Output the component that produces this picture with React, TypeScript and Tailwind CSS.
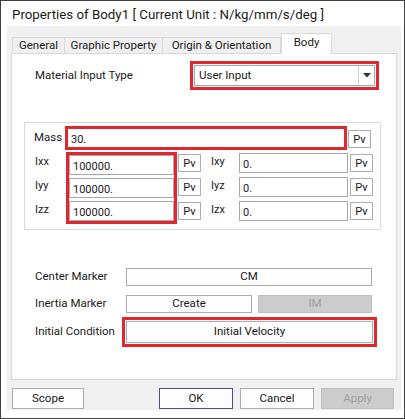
import React from "react";

const F = { fontFamily: 'Roboto, "Noto Sans", sans-serif' };

function Pv() {
  return (
    <div className="w-[23px] h-[18px] border border-[#adadad] bg-[#fdfdfd] flex items-center justify-center text-[11px] text-[#1a1a1a] leading-none">
      Pv
    </div>
  );
}

function Field({ value, w }: { value: string; w: string }) {
  return (
    <div className={`${w} h-[20px] border border-[#a8a8a8] bg-white flex items-center pl-[3px] pt-[2px] text-[11px] text-[#1a1a1a] leading-none`}>
      {value}
    </div>
  );
}

function Btn({ children, w, cls = "" }: { children: React.ReactNode; w: string; cls?: string }) {
  return (
    <div className={`${w} h-[18px] border border-[#adadad] bg-[#fdfdfd] flex items-center justify-center text-[11.5px] text-[#1a1a1a] leading-none ${cls}`}>
      {children}
    </div>
  );
}

export default function App() {
  return (
    <div className="w-[405px] h-[419px] border border-[#404040] bg-white flex flex-col text-[#1a1a1a] whitespace-nowrap" style={F}>
      <div className="h-[25px] pl-[11px] flex items-center text-[13.3px] text-[#1a1a1a] pt-[2px]">
        Properties of Body1 [ Current Unit : N/kg/mm/s/deg ]
      </div>
      <div className="ml-[6px] mr-[3px] h-[384px] bg-[#f0f0f0] flex flex-col">
        {/* tabs */}
        <div className="mt-[7px] ml-[5px] h-[20px] flex items-end text-[11.5px] leading-none">
          <div className="w-[53px] h-[16px] border border-b-0 border-[#d9d9d9] bg-[#f0f0f0] flex items-center justify-center">General</div>
          <div className="w-[98px] h-[16px] border border-b-0 border-l-0 border-[#d9d9d9] bg-[#f0f0f0] flex items-center justify-center">Graphic Property</div>
          <div className="w-[118px] h-[16px] border border-b-0 border-l-0 border-[#d9d9d9] bg-[#f0f0f0] flex items-center justify-center">Origin &amp; Orientation</div>
          <div className="relative z-10 -mb-px w-[51px] h-[21px] border border-b-0 border-[#d9d9d9] bg-white flex items-start justify-center pt-[3px]">Body</div>
        </div>
        {/* pane */}
        <div className="ml-[4px] w-[386px] h-[327px] border border-[#d9d9d9] bg-white flex flex-col">
          {/* material input type */}
          <div className="mt-[7px] flex items-center">
            <div className="ml-[23px] w-[155px] text-[11.5px]">Material Input Type</div>
            <div className="w-[189px] h-[29px] border-[3px] border-[#e0262e] p-px">
              <div className="w-full h-full border border-[#a8a8a8] flex">
                <div className="flex-1 flex items-center pl-[4px] text-[11.5px]">User Input</div>
                <div className="w-[16px] border-l border-[#d0d0d0] flex items-center justify-center">
                  <svg width="8" height="5" viewBox="0 0 8 5"><path d="M0 0H8L4 4.5Z" fill="#333" /></svg>
                </div>
              </div>
            </div>
          </div>
          {/* group box */}
          <div className="mt-[32px] ml-[12px] w-[357px] h-[108px] border border-[#d9d9d9] flex flex-col">
            <div className="mt-[3px] flex items-center">
              <div className="ml-[9px] w-[31px] text-[11.5px]">Mass</div>
              <div className="w-[282px] h-[24px] border-[3px] border-[#e0262e] flex items-center pl-[3px] pt-[2px] text-[11px] leading-none">30.</div>
              <div className="ml-px mt-[2px]"><Pv /></div>
            </div>
            <div className="mt-[2px] flex">
              <div className="ml-[10px] w-[31px] flex flex-col text-[11px] leading-none">
                <div className="h-[24px] pt-[4px]">Ixx</div>
                <div className="h-[24px] pt-[4px]">Iyy</div>
                <div className="h-[24px] pt-[4px]">Izz</div>
              </div>
              <div className="w-[111px] h-[72px] border-[3px] border-[#e0262e] flex flex-col gap-[3px]">
                <Field value="100000." w="w-full" />
                <Field value="100000." w="w-full" />
                <Field value="100000." w="w-full" />
              </div>
              <div className="ml-[1px] pt-[2px] flex flex-col gap-[6px]">
                <Pv />
                <Pv />
                <Pv />
              </div>
              <div className="ml-[10px] w-[28px] flex flex-col text-[11px] leading-none">
                <div className="h-[24px] pt-[4px]">Ixy</div>
                <div className="h-[24px] pt-[4px]">Iyz</div>
                <div className="h-[24px] pt-[4px]">Izx</div>
              </div>
              <div className="pt-[1px] flex flex-col gap-[4px]">
                <Field value="0." w="w-[109px]" />
                <Field value="0." w="w-[109px]" />
                <Field value="0." w="w-[109px]" />
              </div>
              <div className="ml-[2px] pt-[2px] flex flex-col gap-[6px]">
                <Pv />
                <Pv />
                <Pv />
              </div>
            </div>
          </div>
          {/* markers */}
          <div className="mt-[38px] flex items-center">
            <div className="ml-[23px] w-[91px] text-[11.5px]">Center Marker</div>
            <Btn w="w-[246px]">CM</Btn>
          </div>
          <div className="mt-[9px] flex items-center">
            <div className="ml-[23px] w-[91px] text-[11.5px]">Inertia Marker</div>
            <Btn w="w-[126px]">Create</Btn>
            <Btn w="w-[114px]" cls="ml-[6px] !bg-[#cccccc] !border-[#bfbfbf] !text-[#a0a0a0]">IM</Btn>
          </div>
          <div className="mt-[4px] flex items-center">
            <div className="ml-[23px] w-[87px] text-[11.5px]">Initial Condition</div>
            <div className="w-[255px] h-[30px] border-[3px] border-[#e0262e] p-px">
              <div className="w-full h-full border border-[#adadad] bg-[#fdfdfd] flex items-center justify-center text-[11.5px]">Initial Velocity</div>
            </div>
          </div>
        </div>
        {/* bottom buttons */}
        <div className="mt-[8px] flex text-[11.5px]">
          <div className="ml-[5px] w-[72px] h-[21px] border border-[#adadad] bg-[#fdfdfd] flex items-center justify-center">Scope</div>
          <div className="ml-[75px] w-[74px] h-[21px] border border-[#5a4a80] bg-[#fdfcff] flex items-center justify-center">OK</div>
          <div className="ml-[7px] w-[74px] h-[21px] border border-[#adadad] bg-[#fdfdfd] flex items-center justify-center">Cancel</div>
          <div className="ml-[7px] w-[73px] h-[21px] border border-[#bfbfbf] bg-[#cccccc] text-[#a0a0a0] flex items-center justify-center">Apply</div>
        </div>
      </div>
    </div>
  );
}
